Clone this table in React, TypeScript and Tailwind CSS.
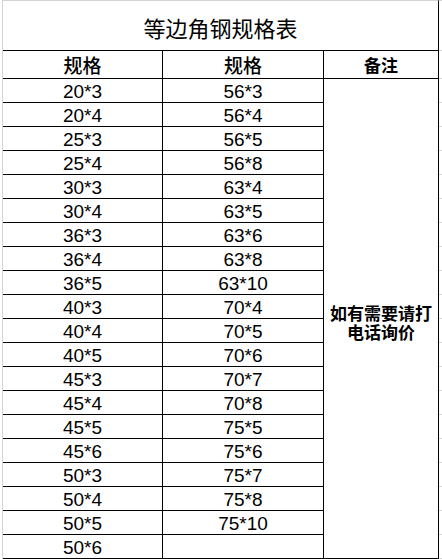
const LEFT = [
  "20*3", "20*4", "25*3", "25*4", "30*3", "30*4", "36*3", "36*4", "36*5", "40*3",
  "40*4", "40*5", "45*3", "45*4", "45*5", "45*6", "50*3", "50*4", "50*5", "50*6",
];

const RIGHT = [
  "56*3", "56*4", "56*5", "56*8", "63*4", "63*5", "63*6", "63*8", "63*10", "70*4",
  "70*5", "70*6", "70*7", "70*8", "75*5", "75*6", "75*7", "75*8", "75*10", "",
];

const CJK = "font-['Noto_Sans_CJK_SC','Noto_Sans',sans-serif]";
const LATIN = "font-['Liberation_Sans',Arial,sans-serif]";

export default function App() {
  return (
    <div className="w-[442px] h-[559px] bg-white overflow-hidden flex text-black">
      {/* white strip left of the sheet gridline */}
      <div className="w-[2px] shrink-0" />

      <div className="w-[437px] shrink-0 border-l border-[#d4d4d4]">
        <div
          className={`h-[50px] border-t border-[#d4d4d4] border-r border-r-black flex items-center justify-center pt-[3px] text-[22px] ${CJK}`}
        >
          等边角钢规格表
        </div>

        <div className="grid grid-cols-[160px_161px_115px] grid-rows-[29px_repeat(20,24px)]">
          <div
            className={`border-y border-r border-black flex items-center justify-center text-[19px] font-medium leading-none ${CJK}`}
          >
            规格
          </div>
          <div
            className={`border-y border-r border-black flex items-center justify-center text-[19px] font-medium leading-none ${CJK}`}
          >
            规格
          </div>
          <div
            className={`border-y border-r border-black flex items-center justify-center text-[17px] font-semibold leading-none ${CJK}`}
          >
            备注
          </div>

          {LEFT.map((spec, i) => (
            <Row key={spec} left={spec} right={RIGHT[i]} first={i === 0} />
          ))}
        </div>
      </div>

      {/* gridline stubs to the right of the table */}
      <div className="flex-1 flex flex-col">
        <div className="h-[50px] border-t border-[#d4d4d4]" />
        <div className="h-[28px] border-t border-[#d4d4d4]" />
        {LEFT.map((spec) => (
          <div key={spec} className="h-[24px] border-t border-[#d4d4d4]" />
        ))}
        <div className="h-[1px] bg-[#d4d4d4]" />
      </div>
    </div>
  );
}

function Row({ left, right, first }: { left: string; right: string; first: boolean }) {
  return (
    <>
      <div
        className={`border-b border-r border-black flex items-center justify-center pt-[2px] text-[19px] leading-none ${LATIN}`}
      >
        {left}
      </div>
      <div
        className={`border-b border-r border-black flex items-center justify-center pt-[2px] text-[19px] leading-none ${LATIN}`}
      >
        {right}
      </div>
      {first && (
        <div
          className={`row-span-20 border-b border-r border-black flex items-center justify-center pt-[6px] text-center text-[17px] font-semibold leading-[19px] ${CJK}`}
        >
          <span className="w-[104px]">如有需要请打电话询价</span>
        </div>
      )}
    </>
  );
}
